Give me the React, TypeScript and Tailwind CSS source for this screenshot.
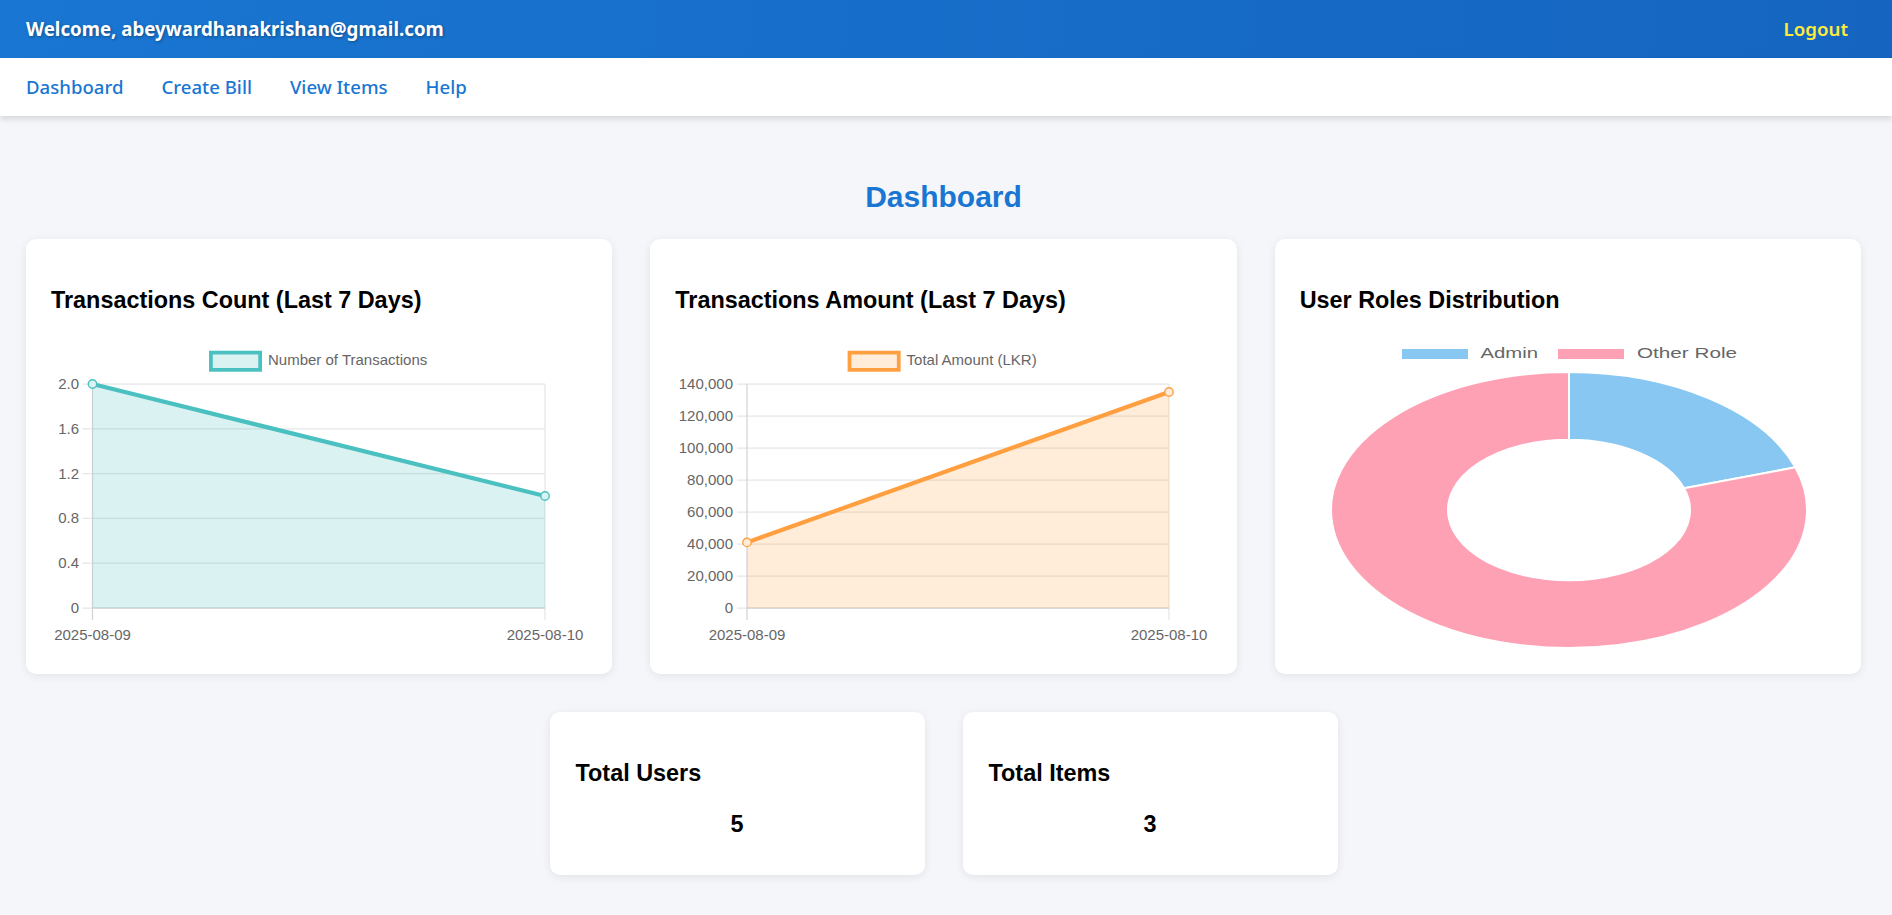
import React from 'react'

const FONT = 'Liberation Sans, Arial, sans-serif'
const TOP = 47
const BOTTOM = 271
const RIGHT = 494

type LineChartProps = {
  ticks: string[]
  axisX: number
  labelX: number
  y0: number
  y1: number
  legend: string
  legendX: number
  stroke: string
  fill: string
  box: string
}

function LineChart({ ticks, axisX, labelX, y0, y1, legend, legendX, stroke, fill, box }: LineChartProps) {
  const step = (BOTTOM - TOP) / (ticks.length - 1)
  return (
    <svg width={536} height={312} className="block" fontFamily={FONT}>
      <rect x={legendX + 1.9} y={15.6} width={49.25} height={17.25} fill={box} stroke={stroke} strokeWidth={3.75} />
      <text x={legendX + 59} y={28} fontSize={15} fill="#666">
        {legend}
      </text>
      {ticks.map((t, i) => {
        const y = TOP + i * step
        return (
          <g key={t}>
            <line x1={axisX - 10} x2={RIGHT} y1={y} y2={y} stroke="#e6e6e6" strokeWidth={1.25} />
            <text x={labelX} y={y + 5} textAnchor="end" fontSize={15} fill="#666">
              {t}
            </text>
          </g>
        )
      })}
      <line x1={axisX} x2={axisX} y1={TOP} y2={BOTTOM + 12} stroke="#d4d4d4" strokeWidth={1.25} />
      <line x1={RIGHT} x2={RIGHT} y1={TOP} y2={BOTTOM + 12} stroke="#e6e6e6" strokeWidth={1.25} />
      <line x1={axisX} x2={RIGHT} y1={BOTTOM} y2={BOTTOM} stroke="#d4d4d4" strokeWidth={1.25} />
      <polygon points={`${axisX},${y0} ${RIGHT},${y1} ${RIGHT},${BOTTOM} ${axisX},${BOTTOM}`} fill={fill} />
      <line x1={axisX} y1={y0} x2={RIGHT} y2={y1} stroke={stroke} strokeWidth={4.2} strokeLinecap="round" />
      <circle cx={axisX} cy={y0} r={4.2} fill={box} stroke={stroke} strokeWidth={1.4} />
      <circle cx={RIGHT} cy={y1} r={4.2} fill={box} stroke={stroke} strokeWidth={1.4} />
      <text x={axisX} y={303} textAnchor="middle" fontSize={15} fill="#666">
        2025-08-09
      </text>
      <text x={RIGHT} y={303} textAnchor="middle" fontSize={15} fill="#666">
        2025-08-10
      </text>
    </svg>
  )
}

// point on a circle squashed into the ellipse, angle from 12 o'clock clockwise
function pt(cx: number, cy: number, rx: number, ry: number, deg: number) {
  const a = (deg * Math.PI) / 180
  return `${cx + rx * Math.sin(a)},${cy - ry * Math.cos(a)}`
}

function slice(from: number, to: number) {
  const cx = 269, cy = 173, rx = 238, ry = 138, irx = 121, iry = 70.3
  const large = to - from > 180 ? 1 : 0
  return [
    `M${pt(cx, cy, rx, ry, from)}`,
    `A${rx} ${ry} 0 ${large} 1 ${pt(cx, cy, rx, ry, to)}`,
    `L${pt(cx, cy, irx, iry, to)}`,
    `A${irx} ${iry} 0 ${large} 0 ${pt(cx, cy, irx, iry, from)}`,
    'Z',
  ].join(' ')
}

function RolesChart() {
  return (
    <svg width={536} height={312} className="block" fontFamily={FONT}>
      <rect x={102} y={12} width={66} height={10} fill="#87c7f2" />
      <text x={180.4} y={21} fontSize={14} fill="#666" textLength={57.6} lengthAdjust="spacingAndGlyphs">
        Admin
      </text>
      <rect x={258} y={12} width={66} height={10} fill="#ffa1b5" />
      <text x={337} y={21} fontSize={14} fill="#666" textLength={100} lengthAdjust="spacingAndGlyphs">
        Other Role
      </text>
      <path d={slice(0, 72)} fill="#87c7f2" stroke="#fff" strokeWidth={2} />
      <path d={slice(72, 360)} fill="#ffa1b5" stroke="#fff" strokeWidth={2} />
    </svg>
  )
}

function Card({ title, children }: { title: string; children: React.ReactNode }) {
  return (
    <div className="rounded-[10px] bg-white px-[25px] pt-[25px] pb-[25px] shadow-[0_2px_10px_rgba(0,0,0,0.08)]">
      <h3 className="mt-[23px] mb-[23px] text-[23.4px] leading-[27px] font-bold text-black">{title}</h3>
      {children}
    </div>
  )
}

function StatCard({ title, value }: { title: string; value: number }) {
  return (
    <div className="w-[375px] rounded-[10px] bg-white px-[26px] pt-[25px] pb-[37px] shadow-[0_2px_10px_rgba(0,0,0,0.08)]">
      <h3 className="mt-[23px] mb-[24px] text-[23.4px] leading-[27px] font-bold text-black">{title}</h3>
      <p className="text-center text-[23.4px] leading-[27px] font-bold text-black">{value}</p>
    </div>
  )
}

export default function App() {
  return (
    <div className="min-h-screen bg-[#f4f6fa] font-['Liberation_Sans',Arial,sans-serif]">
      <header className="flex h-[58px] items-center justify-between bg-linear-to-r from-[#1976d2] to-[#1565c0] pr-[44px] pl-[26px] font-['Noto_Sans',sans-serif] [text-shadow:1px_1px_3px_rgba(0,0,0,0.35)]">
        <span className="text-[18.7px] font-bold text-white">Welcome, abeywardhanakrishan@gmail.com</span>
        <button className="text-[18.7px] font-semibold text-[#ffeb3b]">Logout</button>
      </header>
      <nav className="relative flex h-[58px] items-center gap-[38px] bg-white pl-[26px] font-['Noto_Sans',sans-serif] text-[18.6px] font-medium text-[#1976d2] shadow-[0_3px_6px_rgba(0,0,0,0.13)]">
        <a href="#">Dashboard</a>
        <a href="#">Create Bill</a>
        <a href="#">View Items</a>
        <a href="#">Help</a>
      </nav>
      <main className="pt-[63px] pr-[31px] pb-[35px] pl-[26px]">
        <h2 className="mb-[25px] text-center text-[30px] leading-[35px] font-bold text-[#1976d2]">Dashboard</h2>
        <div className="grid grid-cols-3 gap-[38px]">
          <Card title="Transactions Count (Last 7 Days)">
            <LineChart
              ticks={['2.0', '1.6', '1.2', '0.8', '0.4', '0']}
              axisX={41.5}
              labelX={28}
              y0={47}
              y1={159}
              legend="Number of Transactions"
              legendX={158}
              stroke="rgb(75,192,192)"
              fill="rgba(75,192,192,0.2)"
              box="#dbf2f2"
            />
          </Card>
          <Card title="Transactions Amount (Last 7 Days)">
            <LineChart
              ticks={['140,000', '120,000', '100,000', '80,000', '60,000', '40,000', '20,000', '0']}
              axisX={72}
              labelX={58}
              y0={205.4}
              y1={55}
              legend="Total Amount (LKR)"
              legendX={172.6}
              stroke="rgb(255,159,64)"
              fill="rgba(255,159,64,0.2)"
              box="#ffecd9"
            />
          </Card>
          <Card title="User Roles Distribution">
            <RolesChart />
          </Card>
        </div>
        <div className="mt-[38px] flex justify-center gap-[38px]">
          <StatCard title="Total Users" value={5} />
          <StatCard title="Total Items" value={3} />
        </div>
      </main>
    </div>
  )
}
